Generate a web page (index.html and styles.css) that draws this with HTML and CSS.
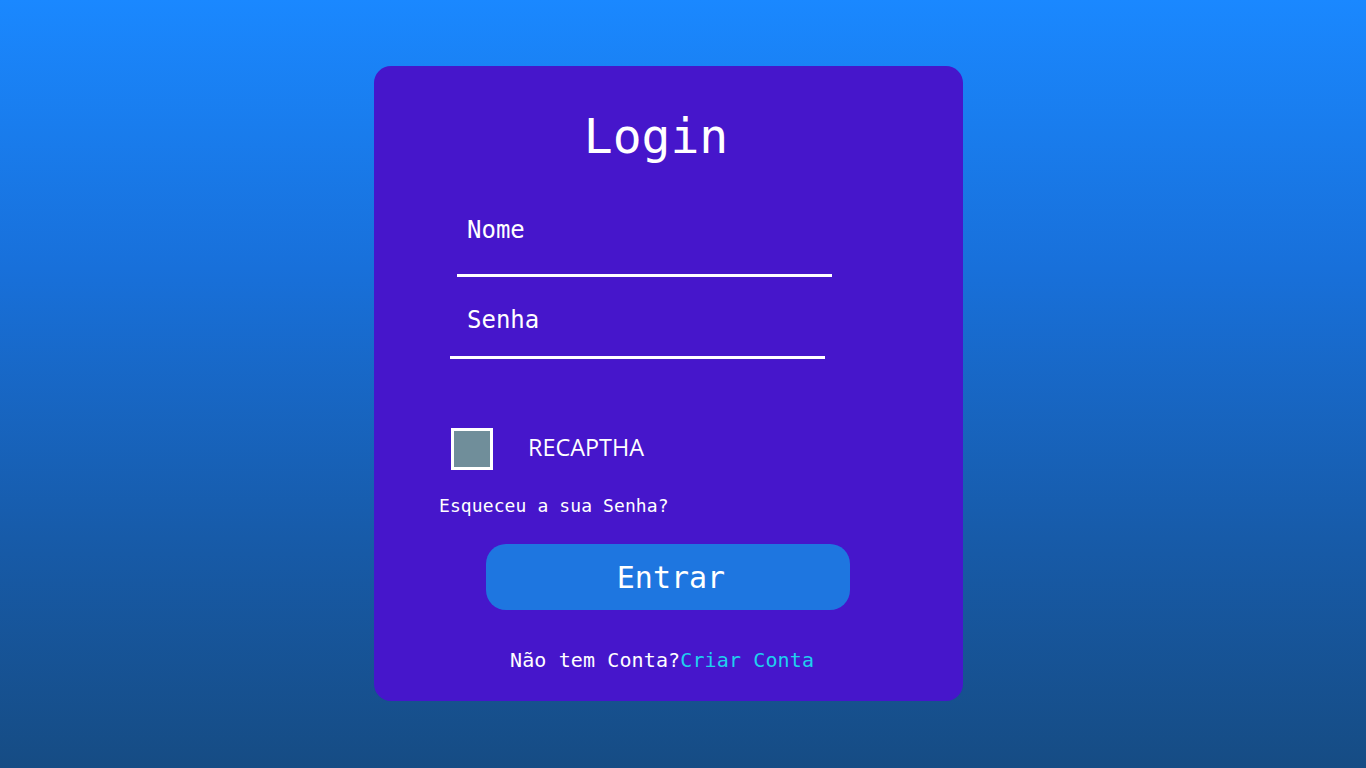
FILE: index.html
```html
<!DOCTYPE html>
<html lang="pt-BR">
<head>
<meta charset="utf-8">
<title>Login</title>
<link rel="stylesheet" href="styles.css">
</head>
<body>
<main class="card">
  <h1 class="title">Login</h1>
  <input class="field field-name" type="text" placeholder="Nome">
  <input class="field field-pass" type="password" placeholder="Senha">
  <div class="captcha">
    <span class="check"></span>
    <span class="captcha-label">RECAPTHA</span>
  </div>
  <a class="forgot" href="#">Esqueceu a sua Senha?</a>
  <button class="btn" type="button">Entrar</button>
  <p class="signup">Não tem Conta?<a class="signup-link" href="#">Criar Conta</a></p>
</main>
</body>
</html>
```

FILE: styles.css
```css
* { box-sizing: border-box; }

html, body {
  margin: 0;
  height: 100%;
}

body {
  background: linear-gradient(to bottom, #1a88ff 0%, #1870da 35%, #175ba9 70%, #164c84 100%);
  font-family: "DejaVu Sans Mono", "Liberation Mono", monospace;
  color: #fff;
  padding: 66px 0 0 374px;
}

.card {
  width: 589px;
  height: 635px;
  background: #4616cb;
  border-radius: 17px;
  padding-top: 42px;
  display: flex;
  flex-direction: column;
}

.title {
  margin: 0 25px 0 0;
  font-size: 48px;
  font-weight: normal;
  line-height: 56px;
  text-align: center;
}

.field {
  display: block;
  font-family: inherit;
  font-size: 24px;
  color: #fff;
  background: transparent;
  border: none;
  border-bottom: 3px solid #fff;
  outline: none;
  width: 375px;
}

.field::placeholder {
  color: #fff;
  opacity: 1;
}

.field-name {
  margin: 21px 0 0 83px;
  height: 92px;
  padding: 0 10px;
}

.field-pass {
  margin: 7px 0 0 76px;
  height: 75px;
  padding: 0 17px;
}

.captcha {
  display: flex;
  align-items: center;
  margin: 69px 0 0 77px;
  height: 42px;
  gap: 35px;
}

.check {
  width: 42px;
  height: 42px;
  border: 3px solid #fff;
  background: #708e9a;
}

.captcha-label {
  font-family: "Open Sans", "Noto Sans", sans-serif;
  font-size: 23.4px;
  margin-bottom: 4px;
}

.forgot {
  display: block;
  margin: 25px 0 0 65px;
  font-size: 18px;
  letter-spacing: 0.1px;
  color: #fff;
  text-decoration: none;
  line-height: 21px;
}

.btn {
  margin: 28px 0 0 112px;
  width: 364px;
  height: 66px;
  border: none;
  border-radius: 20px;
  background: #1e76e0;
  color: #fff;
  font-family: inherit;
  font-size: 30px;
  padding: 0 0 0 6px;
}

.signup {
  margin: 39px 0 0 136px;
  font-size: 20px;
  letter-spacing: 0.12px;
  line-height: 23px;
}

.signup-link {
  color: #1fd0ee;
  text-decoration: none;
}
```
